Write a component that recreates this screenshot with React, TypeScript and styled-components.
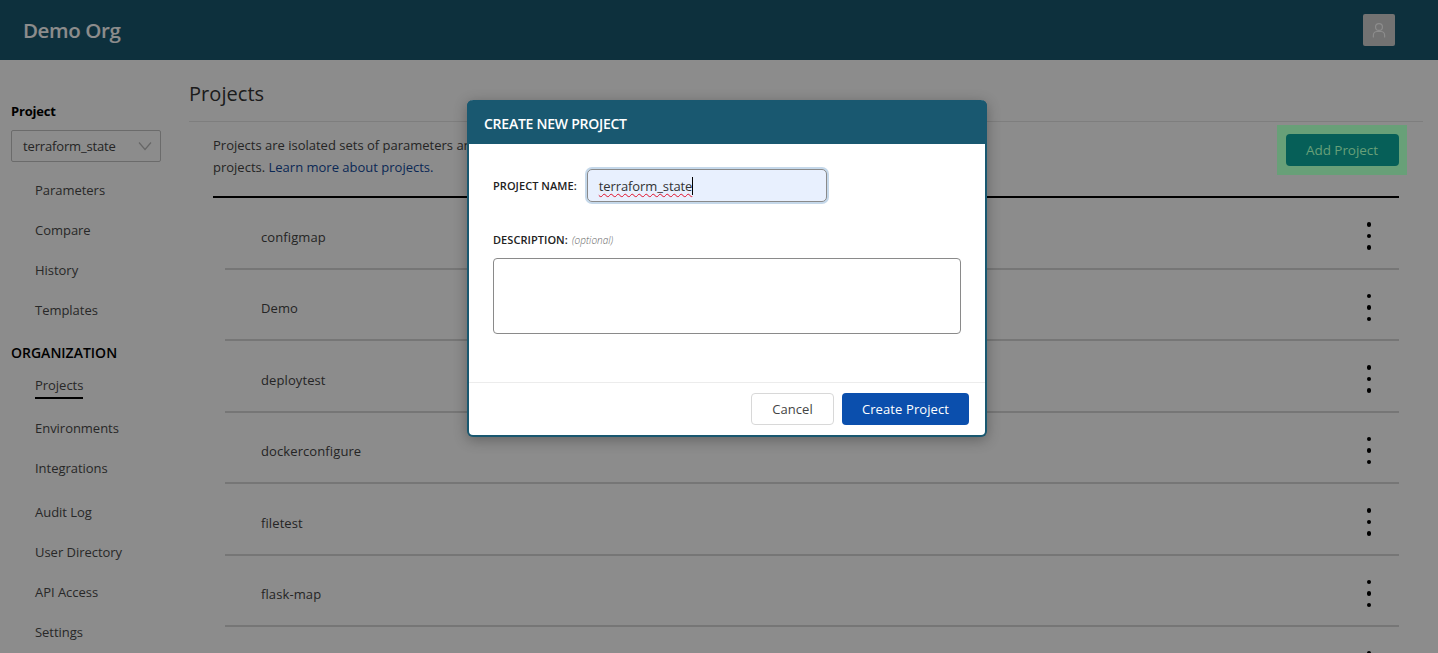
import React from 'react';
import styled, { createGlobalStyle } from 'styled-components';

const GlobalStyle = createGlobalStyle`
  html, body { margin: 0; padding: 0; background: #fff; }
  body { font-family: "Open Sans", "Noto Sans", "Liberation Sans", sans-serif; color: #333; }
  * { box-sizing: border-box; }
`;

const Page = styled.div`
  position: relative;
  width: 100%;
  height: 653px;
  overflow: hidden;
  background: #fff;
`;
const Header = styled.header`
  height: 60px;
  background: #195870;
  display: flex;
  align-items: center;
  justify-content: space-between;
  padding: 0 43px 0 23px;
`;
const OrgName = styled.div`
  font-size: 20.5px;
  font-weight: 600;
  letter-spacing: -0.4px;
  color: #fff;
`;
const Avatar = styled.div`
  width: 32px;
  height: 32px;
  background: #cfcfcf;
  border-radius: 2px;
  display: flex;
  align-items: center;
  justify-content: center;
`;
const Layout = styled.div`
  display: flex;
  align-items: flex-start;
`;
const Sidebar = styled.aside`
  width: 189px;
  flex: none;
  padding: 42px 0 0 11px;
`;
const SideTitle = styled.div`
  font-size: 13px;
  line-height: 18px;
  font-weight: 700;
  color: #000;
  letter-spacing: -0.2px;
`;
const Select = styled.div`
  margin-top: 10px;
  width: 150px;
  height: 32px;
  border: 1px solid #c4c4c4;
  border-radius: 2px;
  display: flex;
  align-items: center;
  justify-content: space-between;
  padding: 0 8px 0 11px;
  font-size: 13px;
  letter-spacing: -0.15px;
  color: #444;
`;
const NavList = styled.nav<{ $top: number }>`
  display: flex;
  flex-direction: column;
  margin-top: ${p => p.$top}px;
  padding-left: 24px;
`;
const NavItem = styled.a<{ $h?: number; $active?: boolean }>`
  display: block;
  height: ${p => p.$h ?? 40}px;
  line-height: 40px;
  font-size: 13px;
  letter-spacing: -0.03px;
  color: #4a4a4a;
  & > span {
    display: inline-block;
    line-height: 18px;
    padding-bottom: 3px;
    border-bottom: ${p => (p.$active ? '2px solid #000' : 'none')};
  }
`;
const OrgTitle = styled(SideTitle)`
  margin-top: 14px;
  font-size: 14px;
  font-weight: 600;
  letter-spacing: 0;
`;
const Main = styled.main`
  flex: 1;
  padding: 19.5px 15px 0 0;
`;
const Title = styled.h1`
  margin: 0;
  font-size: 20px;
  line-height: 27px;
  font-weight: 400;
  letter-spacing: 0.05px;
  color: #333;
`;
const Divider = styled.div`
  height: 1px;
  background: #e6e6e6;
  margin-top: 14.5px;
`;
const Intro = styled.div`
  display: flex;
  justify-content: space-between;
  align-items: flex-start;
  padding: 3px 16px 0 24px;
`;
const Description = styled.p`
  margin: 9px 0 0;
  font-size: 13px;
  line-height: 22px;
  letter-spacing: 0;
  color: #444;
`;
const Learn = styled.a`
  color: #134a9c;
`;
const Highlight = styled.div`
  position: relative;
  z-index: 2;
  width: 130px;
  height: 50px;
  background: #68a078;
  display: flex;
  align-items: center;
  justify-content: center;
`;
const AddButton = styled.button`
  width: 113px;
  height: 32px;
  border: none;
  border-radius: 4px;
  background: #065f58;
  color: #68a078;
  font: inherit;
  font-size: 13.5px;
  letter-spacing: -0.05px;
`;
const Table = styled.div`
  margin: 18px 24px 0 24px;
  border-top: 2px solid #000;
`;
const Row = styled.div`
  height: 71.5px;
  margin-left: 12px;
  padding: 8px 28px 0 36px;
  display: flex;
  align-items: center;
  justify-content: space-between;
  border-bottom: 2px solid #d8d8d8;
  font-size: 13px;
  letter-spacing: 0.1px;
  color: #444;
`;
const Dots = styled.span`
  display: flex;
  flex-direction: column;
  gap: 7px;
  margin-bottom: 2px;
  & > i {
    display: block;
    width: 4.5px;
    height: 4.5px;
    border-radius: 50%;
    background: #000;
  }
`;
const Overlay = styled.div`
  position: absolute;
  inset: 0;
  z-index: 1;
  background: rgba(0, 0, 0, 0.45);
`;
const Modal = styled.div`
  position: absolute;
  z-index: 3;
  left: 467px;
  top: 100px;
  width: 520px;
  height: 337px;
  background: #fff;
  border: 2px solid #195870;
  border-top: none;
  border-radius: 6px;
  box-shadow: 0 3px 14px rgba(0, 0, 0, 0.3);
  display: flex;
  flex-direction: column;
`;
const ModalHeader = styled.div`
  height: 44px;
  margin: 0 -2px;
  background: #195870;
  border-radius: 6px 6px 0 0;
  display: flex;
  align-items: center;
  padding: 2px 0 0 17px;
  color: #fff;
  font-size: 14px;
  font-weight: 600;
  letter-spacing: -0.25px;
`;
const ModalBody = styled.div`
  flex: 1;
  padding: 25px 24px 0;
`;
const NameRow = styled.div`
  display: flex;
  align-items: center;
  gap: 10px;
`;
const Label = styled.label`
  font-size: 11px;
  font-weight: 600;
  letter-spacing: 0.05px;
  color: #222;
  white-space: nowrap;
`;
const Optional = styled.em`
  font-size: 10px;
  font-weight: 300;
  color: #666;
`;
const NameField = styled.div`
  width: 240px;
  height: 33px;
  border: 1px solid #8a8a8a;
  border-radius: 5px;
  background: #e8f0fe;
  box-shadow: 0 0 0 2px #c5d8ea;
  padding-left: 11px;
  display: flex;
  align-items: center;
  font-size: 13px;
  letter-spacing: -0.1px;
  color: #333;
`;
const Typed = styled.span`
  text-decoration: underline wavy #e0102a;
  text-decoration-thickness: 1px;
  text-underline-offset: 2px;
  border-right: 1px solid #000;
  line-height: 18px;
`;
const DescLabel = styled.div`
  margin-top: 29px;
  line-height: 14px;
`;
const TextBox = styled.textarea`
  display: block;
  margin-top: 11px;
  width: 468px;
  height: 76px;
  border: 1px solid #8a8a8a;
  border-radius: 4px;
  background: #fff;
  resize: none;
  outline: none;
`;
const ModalFooter = styled.div`
  height: 53px;
  border-top: 1px solid #ececec;
  display: flex;
  justify-content: flex-end;
  align-items: flex-start;
  gap: 8px;
  padding: 10px 16px 0 0;
`;
const CancelButton = styled.button`
  width: 83px;
  height: 32px;
  background: #fff;
  border: 1px solid #d8d8d8;
  border-radius: 4px;
  font: inherit;
  font-size: 13px;
  letter-spacing: 0.05px;
  color: #444;
`;
const CreateButton = styled.button`
  width: 127px;
  height: 32px;
  background: #0b4fad;
  border: none;
  border-radius: 4px;
  font: inherit;
  font-size: 13px;
  font-weight: 500;
  letter-spacing: 0.1px;
  color: #fff;
`;

const projects = ['configmap', 'Demo', 'deploytest', 'dockerconfigure', 'filetest', 'flask-map', ''];

export default function App() {
  return (
    <Page>
      <GlobalStyle />
      <Header>
        <OrgName>Demo Org</OrgName>
        <Avatar>
          <svg width="18" height="18" viewBox="0 0 24 24" fill="none" stroke="#fff" strokeWidth="1.6">
            <circle cx="12" cy="8" r="4.6" />
            <path d="M4.5 22v-3c0-3 2.4-5 5-5h5c2.6 0 5 2 5 5v3" />
          </svg>
        </Avatar>
      </Header>
      <Layout>
        <Sidebar>
          <SideTitle>Project</SideTitle>
          <Select>
            terraform_state
            <svg width="14" height="10" viewBox="0 0 14 10" fill="none" stroke="#bbb" strokeWidth="1.2">
              <path d="M1 1.5l6 7 6-7" />
            </svg>
          </Select>
          <NavList $top={8}>
            {['Parameters', 'Compare', 'History', 'Templates'].map(n => (
              <NavItem key={n}><span>{n}</span></NavItem>
            ))}
          </NavList>
          <OrgTitle>ORGANIZATION</OrgTitle>
          <NavList $top={3}>
            <NavItem $h={43} $active><span>Projects</span></NavItem>
            <NavItem><span>Environments</span></NavItem>
            <NavItem $h={44}><span>Integrations</span></NavItem>
            <NavItem><span>Audit Log</span></NavItem>
            <NavItem><span>User Directory</span></NavItem>
            <NavItem><span>API Access</span></NavItem>
            <NavItem><span>Settings</span></NavItem>
          </NavList>
        </Sidebar>
        <Main>
          <Title>Projects</Title>
          <Divider />
          <Intro>
            <Description>
              Projects are isolated sets of parameters and
              <br />
              projects. <Learn>Learn more about projects.</Learn>
            </Description>
            <Highlight>
              <AddButton>Add Project</AddButton>
            </Highlight>
          </Intro>
          <Table>
            {projects.map((p, i) => (
              <Row key={i}>
                <span>{p}</span>
                <Dots><i /><i /><i /></Dots>
              </Row>
            ))}
          </Table>
        </Main>
      </Layout>
      <Overlay />
      <Modal>
        <ModalHeader>CREATE NEW PROJECT</ModalHeader>
        <ModalBody>
          <NameRow>
            <Label>PROJECT NAME:</Label>
            <NameField><Typed>terraform_state</Typed></NameField>
          </NameRow>
          <DescLabel>
            <Label>DESCRIPTION:</Label> <Optional>(optional)</Optional>
          </DescLabel>
          <TextBox />
        </ModalBody>
        <ModalFooter>
          <CancelButton>Cancel</CancelButton>
          <CreateButton>Create Project</CreateButton>
        </ModalFooter>
      </Modal>
    </Page>
  );
}
